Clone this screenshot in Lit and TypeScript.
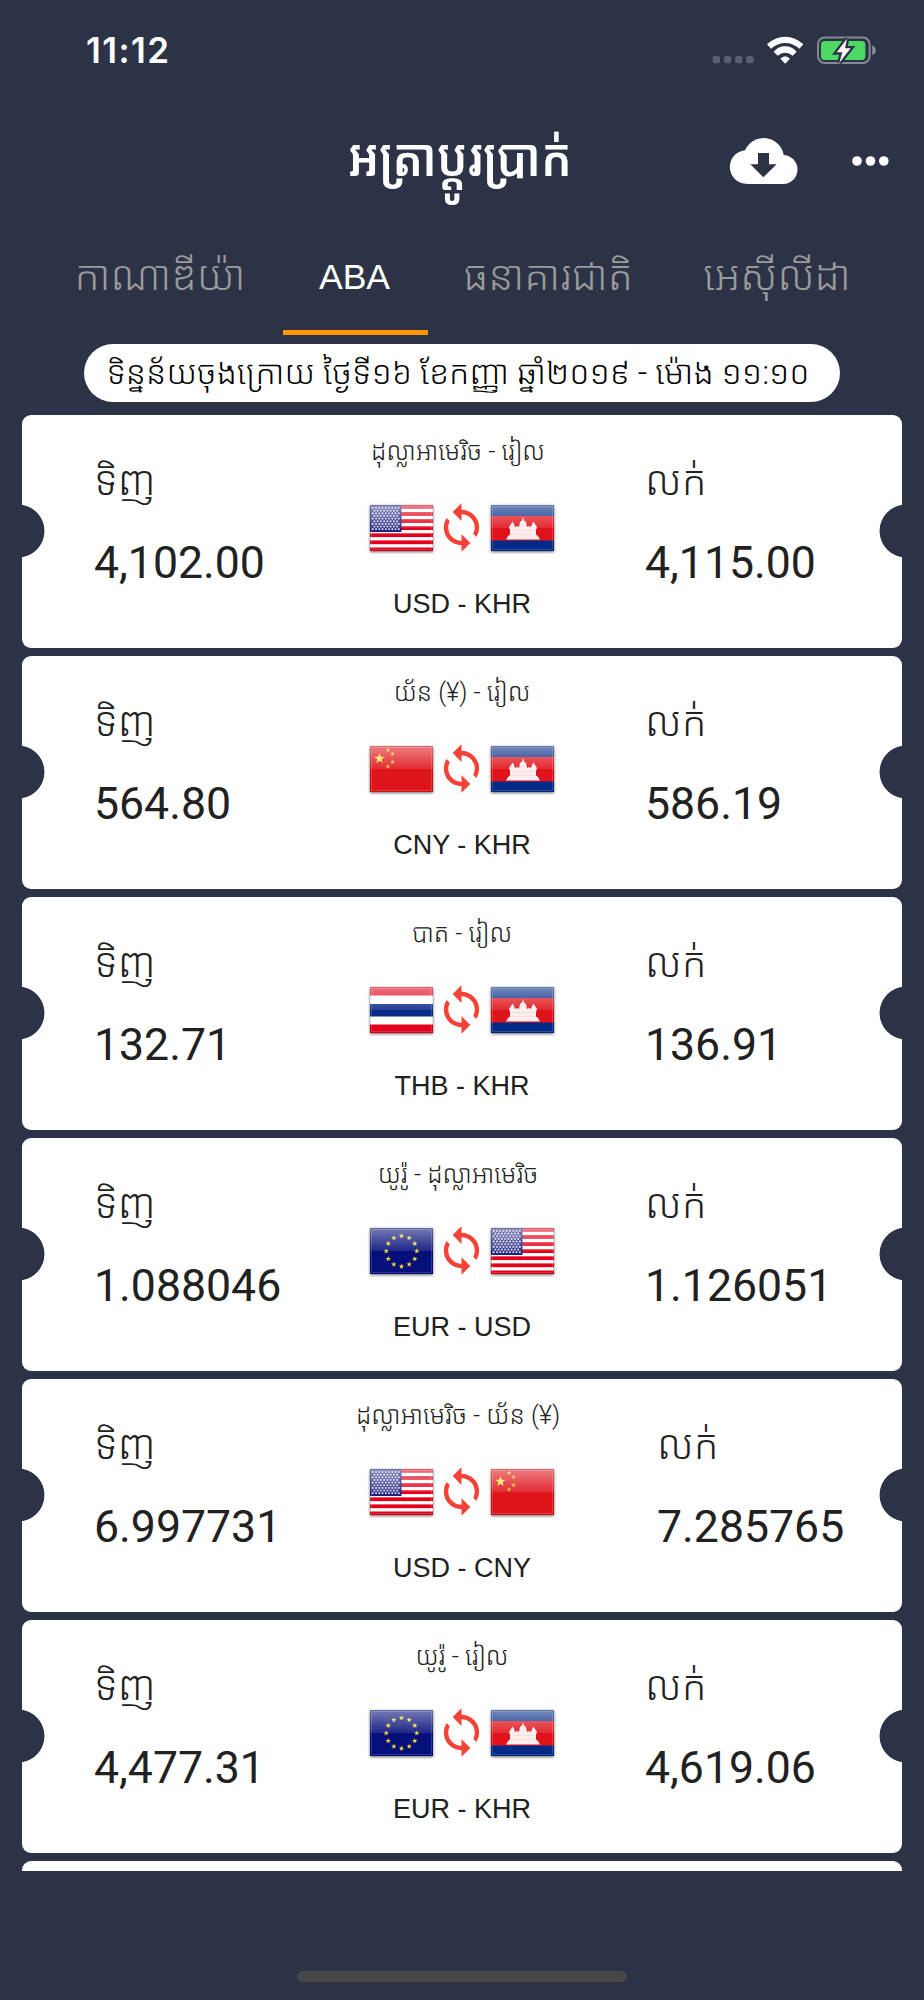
import { LitElement, html, svg, css } from "lit";
import { customElement, property } from "lit/decorators.js";

const star = (cx: number, cy: number, r: number) => {
  const pts: string[] = [];
  for (let i = 0; i < 10; i++) {
    const a = -Math.PI / 2 + (i * Math.PI) / 5;
    const q = i % 2 ? r * 0.4 : r;
    pts.push(`${(cx + q * Math.cos(a)).toFixed(2)},${(cy + q * Math.sin(a)).toFixed(2)}`);
  }
  return pts.join(" ");
};

const art: Record<string, () => unknown> = {
  us: () => svg`<rect width="63" height="46" fill="#fff"/>
    ${[0, 1, 2, 3, 4, 5, 6].map((i) => svg`<rect y=${i * 7.08} width="63" height="3.800" fill="#e2001a"/>`)}
    <rect width="31.500" height="27" fill="#1c1f7c"/>
    ${Array.from({ length: 9 }, (_, r) => Array.from({ length: r % 2 ? 8 : 9 }, (_, c) =>
      svg`<circle cx=${2.8 + c * 3.25 + (r % 2 ? 1.6 : 0)} cy=${3 + r * 2.65} r="1.100" fill="#c9cae2"/>`))}`,
  kh: () => svg`<rect width="63" height="46" fill="#032a86"/>
    <rect y="11" width="63" height="24.500" fill="#e0121b"/>
    <path d="M15 34.500 17 31 19 29.500 19 25 18 22 20 19 21.500 16.500 23 19 24 22 26 21 28 22 29 17 31 15.500 32 12 33 15.500 35 17 36 22 38 21 40 22 41 19 42.500 16.500 44 19 46 22 45 25 45 29.500 47 31 49 34.500Z" fill="#fdeeee"/>
    <path d="M19 29.500H45M22 25.500H42" stroke="#f9d8da" stroke-width=".8"/>`,
  cn: () => svg`<rect width="63" height="46" fill="#de151b"/>
    <polygon points=${star(9.5, 12.5, 5.5)} fill="#ffe640"/>
    ${[[18, 4], [22.5, 8], [22.5, 16], [18, 20.5]].map(([x, y]) => svg`<polygon points=${star(x, y, 2.5)} fill="#fbc93c"/>`)}`,
  th: () => svg`<rect width="63" height="46" fill="#fff"/>
    <rect width="63" height="8.500" fill="#e2001a"/><rect y="37.500" width="63" height="8.500" fill="#e2001a"/>
    <rect y="17" width="63" height="12.500" fill="#0a2a86"/>`,
  eu: () => svg`<rect width="63" height="46" fill="#050f7a"/>
    ${Array.from({ length: 12 }, (_, i) => {
      const a = (i * Math.PI) / 6;
      return svg`<polygon points=${star(31.5 + 15.3 * Math.sin(a), 23.2 - 15.3 * Math.cos(a), 2.9)} fill="#f3d62c"/>`;
    })}`,
};

@customElement("country-flag")
class CountryFlag extends LitElement {
  @property() code = "us";
  static styles = css`
    :host { display: block; width: 63px; height: 46px; }
    svg { display: block; filter: drop-shadow(0 1px 1.5px rgba(0, 0, 0, 0.6)); }
  `;
  render() {
    return html`<svg width="63" height="46" viewBox="0 0 63 46">
      <defs><linearGradient id="g" x1="0" y1="0" x2="0" y2="1">
        <stop offset="0" stop-color="#fff" stop-opacity=".45"/><stop offset="1" stop-color="#fff" stop-opacity=".1"/>
      </linearGradient></defs>
      ${art[this.code]()}
      <rect width="63" height="23" fill="url(#g)"/>
      <rect x="1.500" y="1.500" width="60" height="43" fill="none" stroke="#fff" stroke-opacity=".16"/>
      <rect x=".5" y=".5" width="62" height="45" fill="none" stroke="#000" stroke-opacity=".1"/>
    </svg>`;
  }
}

interface Rate { name: string; code: string; a: string; b: string; buy: string; sell: string; wide?: boolean }

const rates: Rate[] = [
  { name: "ដុល្លាអាមេរិច - រៀល", code: "USD - KHR", a: "us", b: "kh", buy: "4,102.00", sell: "4,115.00" },
  { name: "យ័ន (¥) - រៀល", code: "CNY - KHR", a: "cn", b: "kh", buy: "564.80", sell: "586.19" },
  { name: "បាត - រៀល", code: "THB - KHR", a: "th", b: "kh", buy: "132.71", sell: "136.91" },
  { name: "យូរ៉ូ - ដុល្លាអាមេរិច", code: "EUR - USD", a: "eu", b: "us", buy: "1.088046", sell: "1.126051" },
  { name: "ដុល្លាអាមេរិច - យ័ន (¥)", code: "USD - CNY", a: "us", b: "cn", buy: "6.997731", sell: "7.285765", wide: true },
  { name: "យូរ៉ូ - រៀល", code: "EUR - KHR", a: "eu", b: "kh", buy: "4,477.31", sell: "4,619.06" },
];

@customElement("rate-card")
class RateCard extends LitElement {
  @property({ attribute: false }) rate!: Rate;
  static styles = css`
    :host { display: block; }
    .card {
      display: grid; grid-template-columns: 270px 340px 270px; height: 232.5px;
      box-sizing: border-box; border-radius: 9px; color: #212121;
      background:
        radial-gradient(circle at -4px 116px, #2d3347 26px, transparent 26.8px),
        radial-gradient(circle at 884px 116px, #2d3347 26px, transparent 26.8px), #fff;
    }
    .side { padding: 35px 0 0 72px; white-space: nowrap; }
    .sell { padding-left: 13px; }
    .wide { padding-left: 25px; }
    .label { height: 62px; line-height: 62px; font-size: 40.5px; font-weight: 300; }
    .value { margin-top: 23px; height: 56px; line-height: 56px; font-size: 44.6px; }
    .mid { display: flex; flex-direction: column; align-items: center; white-space: nowrap; }
    .name { margin-top: 15px; height: 44px; line-height: 44px; font-size: 25px; font-weight: 300; }
    .long { padding-right: 8px; }
    .flags { margin-top: 30px; height: 47px; display: flex; align-items: center; gap: 2.5px; }
    .flags svg { margin-left: -1px; margin-right: 1px; }
    .code { margin-top: 35px; height: 36px; line-height: 36px; font-size: 27px; font-family: "Liberation Sans", sans-serif; }
  `;
  render() {
    const r = this.rate;
    return html`<div class="card">
      <div class="side"><div class="label">ទិញ</div><div class="value">${r.buy}</div></div>
      <div class="mid">
        <div class="name ${r.name.includes("ដុល្លា") ? "long" : ""}">${r.name}</div>
        <div class="flags">
          <country-flag code=${r.a}></country-flag>
          <svg width="53" height="53" viewBox="0 0 24 24"><path fill="#f44336" d="M12 4V1L8 5l4 4V6c3.310 0 6 2.690 6 6 0 1.010-.25 1.970-.7 2.800l1.460 1.460A7.930 7.930 0 0020 12c0-4.420-3.580-8-8-8zm0 14c-3.310 0-6-2.690-6-6 0-1.010.25-1.970.7-2.800L5.240 7.740A7.930 7.930 0 004 12c0 4.420 3.580 8 8 8v3l4-4-4-4v3z"/></svg>
          <country-flag code=${r.b}></country-flag>
        </div>
        <div class="code">${r.code}</div>
      </div>
      <div class="side sell ${r.wide ? "wide" : ""}"><div class="label">លក់</div><div class="value">${r.sell}</div></div>
    </div>`;
  }
}

@customElement("app-root")
class AppRoot extends LitElement {
  static styles = css`
    :host {
      display: flex; flex-direction: column; width: 924px; height: 2000px; overflow: hidden;
      box-sizing: border-box; background: #2d3347; color: #fff;
      font-family: Roboto, "Noto Sans Khmer", "Khmer OS", sans-serif;
    }
    .status { height: 100px; display: flex; justify-content: space-between; box-sizing: border-box; padding: 30px 42px 0 86px; }
    .time { font: 600 35px/41px Inter, sans-serif; letter-spacing: 1.4px; }
    .bar { height: 126px; display: flex; align-items: flex-start; justify-content: flex-end; box-sizing: border-box; padding-right: 35px; }
    .title { width: 340px; margin-right: 99px; height: 117px; line-height: 117px; text-align: center; font-weight: 600; font-size: 53px; white-space: nowrap; transform: scaleX(0.88); }
    .cloud { margin-top: 37px; }
    .dots { margin: 55px 0 0 52px; }
    .tabs { height: 109px; display: flex; }
    .tab { height: 104px; line-height: 101px; text-align: center; font-size: 41px; font-weight: 300; color: #9b9b9b; border-bottom: 5px solid transparent; white-space: nowrap; }
    .t0 { width: 246px; padding-left: 37px; }
    .t1 { width: 143px; padding-right: 2px; color: #fff; border-color: #ff9800; font: 400 35.5px/103px "Liberation Sans", sans-serif; }
    .t2 { width: 240px; }
    .t3 { width: 190px; padding-left: 14px; }
    .pill { margin: 9px auto 0; width: 756px; height: 58px; border-radius: 29px; background: #fff; color: #000; line-height: 57px; font-size: 33px; font-weight: 300; text-align: center; white-space: nowrap; box-sizing: border-box; padding-right: 8px; }
    .list { margin: 13px 22px 0; height: 1455.5px; overflow: hidden; display: flex; flex-direction: column; gap: 8.5px; }
    rate-card { flex: none; }
    .next { flex: none; height: 60px; background: #fff; border-radius: 9px; }
    .home { margin: 100px auto 0; width: 330px; height: 11px; border-radius: 6px; background: #474747; }
  `;
  render() {
    return html`
      <div class="status">
        <div class="time">11:12</div>
        <svg width="170" height="40" viewBox="66 30 510 120">
          <g fill="#5a6071"><rect x="68" y="108" width="22" height="22" rx="7"/><rect x="102" y="108" width="22" height="22" rx="7"/><rect x="135" y="108" width="22" height="22" rx="7"/><rect x="168" y="108" width="23" height="22" rx="7"/></g>
          <g fill="#fff">
            <path d="M231 73Q255 50 285.500 50T340 73L328 86Q309 69 285.500 69T243 86Z"/>
            <path d="M251 95Q266 79 285.500 79T320 95L308 107Q298 98 285.500 98T263 107Z"/>
            <path d="M271 116Q285.500 101 300 116L285.500 131Z"/>
          </g>
          <rect x="384" y="52.500" width="155" height="76.500" rx="20" fill="none" stroke="#858894" stroke-width="6"/>
          <path d="M547 76Q557 81 557 91T547 106Z" fill="#8f929d"/>
          <rect x="393" y="63" width="133" height="57" rx="11" fill="#4cd964"/>
          <path d="M471 56 440 97H457L448 128 482 85H465Z" fill="#2d3347" stroke="#2d3347" stroke-width="14"/>
          <path d="M471 56 440 97H457L448 128 482 85H465Z" fill="#fff"/>
        </svg>
      </div>
      <div class="bar">
        <div class="title">អត្រាប្តូរប្រាក់</div>
        <svg class="cloud" width="70" height="48" viewBox="116 350 210 144">
          <g fill="#fff"><circle cx="169" cy="440" r="50.500"/><circle cx="220" cy="414" r="61"/><circle cx="278" cy="447.500" r="43.500"/><rect x="169" y="420" width="109" height="71"/></g>
          <path fill="#2d3347" d="M203 398h33v34h23l-40 39-39-39h23z"/>
        </svg>
        <svg class="dots" width="38" height="12" viewBox="0 0 38 12" fill="#fff"><circle cx="6" cy="6" r="4.800"/><circle cx="19.500" cy="6" r="4.800"/><circle cx="32.800" cy="6" r="4.800"/></svg>
      </div>
      <div class="tabs">
        <div class="tab t0">កាណាឌីយ៉ា</div><div class="tab t1">ABA</div><div class="tab t2">ធនាគារជាតិ</div><div class="tab t3">អេស៊ីលីដា</div>
      </div>
      <div class="pill">ទិន្នន័យចុងក្រោយ ថ្ងៃទី១៦ ខែកញ្ញា ឆ្នាំ២០១៩ - ម៉ោង ១១:១០</div>
      <div class="list">${rates.map((r) => html`<rate-card .rate=${r}></rate-card>`)}<div class="next"></div></div>
      <div class="home"></div>`;
  }
}
